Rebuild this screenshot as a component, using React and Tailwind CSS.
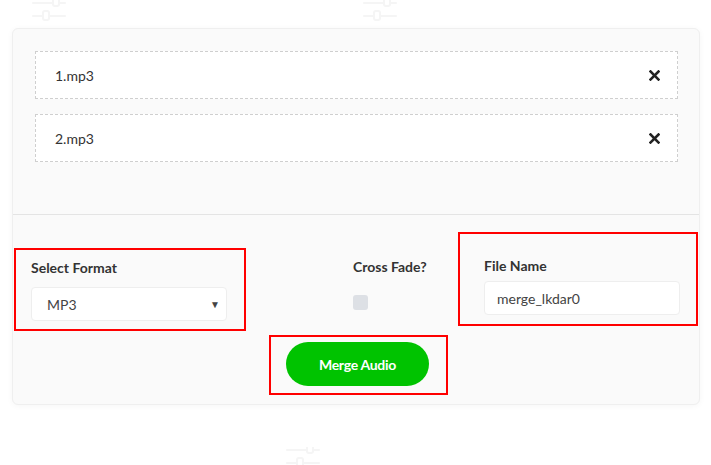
import React from "react";

function Sliders({ className }) {
  return (
    <svg className={className} width="36" height="26" viewBox="0 0 36 26" fill="none" stroke="#f5f5f5" strokeWidth="2" strokeLinecap="round">
      <line x1="2" y1="3" x2="34" y2="3" />
      <rect x="22" y="-3" width="6" height="9" rx="2" fill="#fff" />
      <line x1="2" y1="16" x2="34" y2="16" />
      <rect x="12" y="11" width="6" height="9" rx="2" fill="#fff" />
    </svg>
  );
}

function XIcon() {
  return (
    <svg width="11" height="11" viewBox="0 0 11 11" fill="none" stroke="#222" strokeWidth="2.6" strokeLinecap="square">
      <line x1="1.5" y1="1.5" x2="9.5" y2="9.5" />
      <line x1="9.5" y1="1.5" x2="1.5" y2="9.5" />
    </svg>
  );
}

function FileRow({ name }) {
  return (
    <div className="h-[48px] bg-white border border-dashed border-[#cfcfcf] flex items-center justify-between pl-[19px] pr-[17px]">
      <span className="text-[14px] text-[#333]">{name}</span>
      <XIcon />
    </div>
  );
}

export default function App() {
  return (
    <div className="relative w-[711px] h-[465px] bg-white overflow-hidden" style={{ fontFamily: "Lato, 'Open Sans', sans-serif" }}>
      <Sliders className="absolute left-[31px] top-[0px]" />
      <Sliders className="absolute left-[362px] top-[0px]" />
      <Sliders className="absolute left-[285px] top-[447px]" />
      <div className="relative pt-[28px] pl-[12px] pr-[11px]">
        <div className="bg-[#fafafa] border border-[#efefef] rounded-[6px] shadow-[0_1px_6px_rgba(0,0,0,0.04)]">
          <div className="pt-[22px] pl-[22px] pr-[21px] pb-[52px] flex flex-col gap-[15px]">
            <FileRow name="1.mp3" />
            <FileRow name="2.mp3" />
          </div>
          <div className="h-px bg-[#e4e4e4]" />
          <div className="flex items-start">
            <div className="ml-[1px] mt-[33px] w-[232px] h-[83px] border-2 border-[#f00] pl-[15px] pr-[17px] pt-[8px]">
              <div className="text-[14px] font-bold text-[#333] leading-[20px]">Select Format</div>
              <div className="mt-[9px] h-[34px] bg-white border border-[#eeeeee] rounded-[4px] flex items-center justify-between pl-[15px] pr-[6px]">
                <span className="text-[14px] text-[#444]">MP3</span>
                <span className="text-[10px] text-[#444] leading-none">▼</span>
              </div>
            </div>
            <div className="ml-[107px] w-[105px] mt-[42px]">
              <div className="text-[14px] font-bold text-[#333] leading-[20px]">Cross Fade?</div>
              <div className="mt-[18px] w-[15px] h-[15px] rounded-[3px] bg-[#dde0e5]" />
            </div>
            <div className="mt-[17px] w-[240px] h-[94px] border-2 border-[#f00] pl-[24px] pr-[16px] pt-[22px]">
              <div className="text-[14px] font-bold text-[#333] leading-[20px]">File Name</div>
              <div className="mt-[5px] h-[34px] bg-white border border-[#eeeeee] rounded-[4px] flex items-center pl-[12px]">
                <span className="text-[14px] text-[#444]">merge_lkdar0</span>
              </div>
            </div>
          </div>
          <div className="flex justify-center pt-[4px] pb-[9px] pl-[5px]">
            <div className="w-[179px] h-[60px] border-2 border-[#f00] pl-[15px] pt-[5px]">
              <button className="w-[143px] h-[44px] rounded-full bg-[#00c300] text-white text-[14px] font-bold tracking-[-0.3px]">
                Merge Audio
              </button>
            </div>
          </div>
        </div>
      </div>
    </div>
  );
}
